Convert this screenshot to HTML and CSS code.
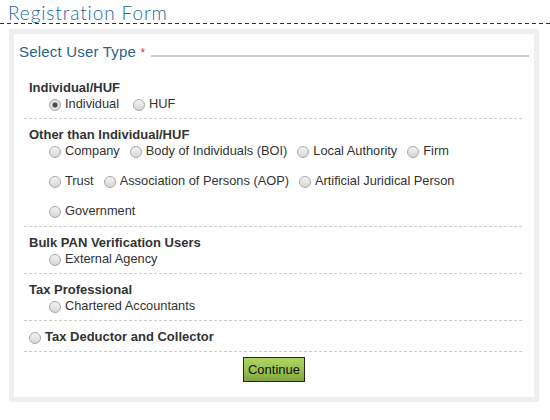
FILE: index.html
```html
<!DOCTYPE html>
<html>
<head>
<meta charset="utf-8">
<title>Registration Form</title>
<link rel="stylesheet" href="styles.css">
</head>
<body>
<div class="page">
  <h1 class="title">Registration Form</h1>
  <div class="title-rule"></div>
  <div class="panel">
    <div class="legend">
      <span class="legend-text">Select User Type <span class="req">*</span></span>
      <span class="legend-line"></span>
    </div>
    <div class="sections">
      <div class="section">
        <div class="sec-head">Individual/HUF</div>
        <div class="options">
          <div class="opt-row opt-row-wide">
            <label class="opt"><input type="radio" name="ut" class="radio" checked><span>Individual</span></label>
            <label class="opt"><input type="radio" name="ut" class="radio"><span>HUF</span></label>
          </div>
        </div>
      </div>
      <div class="section section-wrap">
        <div class="sec-head">Other than Individual/HUF</div>
        <div class="options">
          <div class="opt-row">
            <label class="opt"><input type="radio" name="ut" class="radio"><span>Company</span></label>
            <label class="opt"><input type="radio" name="ut" class="radio"><span>Body of Individuals (BOI)</span></label>
            <label class="opt"><input type="radio" name="ut" class="radio"><span>Local Authority</span></label>
            <label class="opt"><input type="radio" name="ut" class="radio"><span>Firm</span></label>
          </div>
          <div class="opt-row">
            <label class="opt"><input type="radio" name="ut" class="radio"><span>Trust</span></label>
            <label class="opt"><input type="radio" name="ut" class="radio"><span>Association of Persons (AOP)</span></label>
            <label class="opt"><input type="radio" name="ut" class="radio"><span>Artificial Juridical Person</span></label>
          </div>
          <div class="opt-row">
            <label class="opt"><input type="radio" name="ut" class="radio"><span>Government</span></label>
          </div>
        </div>
      </div>
      <div class="section">
        <div class="sec-head">Bulk PAN Verification Users</div>
        <div class="options">
          <div class="opt-row">
            <label class="opt"><input type="radio" name="ut" class="radio"><span>External Agency</span></label>
          </div>
        </div>
      </div>
      <div class="section">
        <div class="sec-head">Tax Professional</div>
        <div class="options">
          <div class="opt-row">
            <label class="opt"><input type="radio" name="ut" class="radio"><span>Chartered Accountants</span></label>
          </div>
        </div>
      </div>
      <div class="section">
        <label class="opt opt-head"><input type="radio" name="ut" class="radio"><span>Tax Deductor and Collector</span></label>
      </div>
    </div>
    <div class="actions">
      <button type="button" class="btn">Continue</button>
    </div>
  </div>
</div>
</body>
</html>
```

FILE: styles.css
```css
html, body {
  margin: 0;
  padding: 0;
  background: #ffffff;
}

.page {
  width: 550px;
  font-family: "Liberation Sans", Arial, sans-serif;
  color: #333333;
}

.title {
  margin: 0;
  padding: 2px 0 0 8px;
  font-family: "Lato", "Open Sans", sans-serif;
  font-weight: 300;
  font-size: 19px;
  line-height: 21px;
  letter-spacing: 0.9px;
  color: #1d66a0;
}

.title-rule {
  height: 1px;
  background: repeating-linear-gradient(to right, #333333 0 4px, transparent 4px 7px);
}

.panel {
  margin: 5px 0 0 9px;
  width: 520px;
  border: 5px solid #efefef;
  background: #ffffff;
}

.legend {
  display: flex;
  padding: 9px 5px 10px 5px;
}

.legend-text {
  font-size: 15px;
  line-height: 18px;
  color: #2b5f8d;
  white-space: nowrap;
  letter-spacing: 0.2px;
}

.req {
  font-size: 12px;
  color: #c8385a;
}

.legend-line {
  flex: 1;
  height: 2px;
  margin: 12px 0 0 6px;
  background: #cccccc;
}

.sections {
  margin: 0 10px;
}

.section {
  padding: 8px 5px 7px 5px;
  background: repeating-linear-gradient(to right, #cccccc 0 3px, transparent 3px 5px) left bottom / 100% 1px no-repeat;
}

.section-wrap {
  padding-bottom: 8px;
}

.sec-head {
  font-weight: bold;
  font-size: 13px;
  line-height: 16px;
  color: #333333;
}

.options {
  display: flex;
  flex-direction: column;
  row-gap: 14px;
  padding-left: 20px;
}

.opt-row {
  display: flex;
  column-gap: 10px;
}

.opt-row-wide {
  column-gap: 14px;
}

.opt {
  display: flex;
  align-items: flex-start;
  height: 16px;
  font-size: 12.8px;
  line-height: 16px;
  color: #333333;
  white-space: nowrap;
}

.opt-head {
  font-weight: bold;
  font-size: 13px;
}

.radio {
  -webkit-appearance: none;
  appearance: none;
  box-sizing: border-box;
  width: 12px;
  height: 12px;
  margin: 3px 4px 0 0;
  border: 1px solid #a8a8a8;
  border-radius: 50%;
  background: linear-gradient(to bottom, #f4f4f4 0%, #d6d6d6 100%);
  flex: none;
}

.radio:checked {
  background: radial-gradient(circle, #4a4a4a 0 2px, #9a9a9a 2.5px, #e6e6e6 3.5px, #d4d4d4 100%);
}

.actions {
  display: flex;
  justify-content: center;
  padding: 5px 0 15px 0;
}

.btn {
  margin: 0;
  padding: 4px 4px;
  font-family: "Liberation Sans", Arial, sans-serif;
  font-size: 13px;
  line-height: 15px;
  color: #111111;
  border: 1px solid #1e2816;
  border-radius: 0;
  background: linear-gradient(to bottom, #afd463 0%, #98c14f 55%, #7fa43f 100%);
}
```
